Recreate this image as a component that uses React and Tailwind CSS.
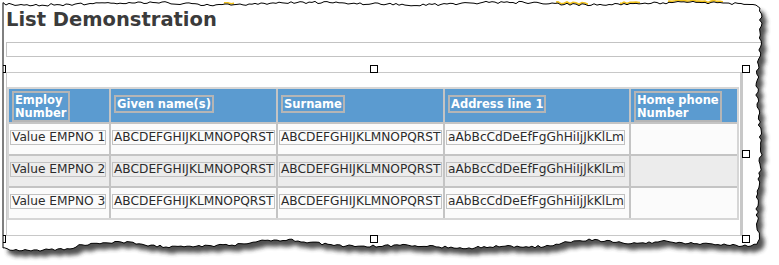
const columns = [
  { key: 'empno', label: ['Employ', 'Number'] },
  { key: 'given', label: ['Given name(s)'] },
  { key: 'surname', label: ['Surname'] },
  { key: 'address', label: ['Address line 1'] },
  { key: 'phone', label: ['Home phone', 'Number'] },
];

const rows = [1, 2, 3].map((n) => ({
  empno: `Value EMPNO ${n}`,
  given: 'ABCDEFGHIJKLMNOPQRST',
  surname: 'ABCDEFGHIJKLMNOPQRST',
  address: 'aAbBcCdDeEfFgGhHiIjJkKlLm',
  phone: '',
}));

// rough outline of the bottom tear, interpolated and roughened below
const bottomProfile = [
  [3, 247], [12, 250], [40, 250], [70, 249], [78, 245], [100, 243], [125, 242],
  [145, 245], [170, 247], [205, 246], [235, 245], [262, 241], [292, 240],
  [315, 243], [345, 246], [380, 246], [410, 245], [440, 247], [470, 248],
  [500, 246], [530, 247], [552, 246], [565, 242], [590, 240], [615, 242],
  [640, 244], [662, 241], [700, 244], [730, 245], [750, 246], [758, 244],
];

function profileAt(x) {
  for (let i = 1; i < bottomProfile.length; i++) {
    const [x0, y0] = bottomProfile[i - 1];
    const [x1, y1] = bottomProfile[i];
    if (x <= x1) return y0 + ((y1 - y0) * (x - x0)) / (x1 - x0);
  }
  return bottomProfile[bottomProfile.length - 1][1];
}

function buildTear() {
  let seed = 4242;
  const rnd = () => {
    seed = (seed * 16807) % 2147483647;
    return seed / 2147483647;
  };
  const pts = [];
  for (let x = 3; x <= 756; x += 3) pts.push([x, 3.6 + Math.sin(x / 29) * 1.2 + (rnd() - 0.5) * 2.4]);
  for (let y = 8; y <= 243; y += 3) pts.push([759 + Math.sin(y / 19) * 1.8 + (rnd() - 0.5) * 3, y]);
  for (let x = 757; x >= 4; x -= 3) pts.push([x, profileAt(x) + (rnd() - 0.5) * 2.2]);
  pts.push([3, 248]);
  return 'M' + pts.map(([x, y]) => `${x.toFixed(1)} ${y.toFixed(1)}`).join('L') + 'Z';
}

const tear = buildTear();
const frame = `M0 0H779V265H0Z${tear}`;

const Handle = ({ className }) => (
  <div className={`absolute w-[8px] h-[8px] bg-white border border-black ${className}`} />
);

const TornEdge = () => (
  <svg className="absolute inset-0 pointer-events-none" width="779" height="265">
    <defs>
      <clipPath id="outside">
        <path d={frame} clipRule="evenodd" />
      </clipPath>
      <clipPath id="yellowBits">
        <rect x="224" y="0" width="10" height="10" />
        <rect x="556" y="0" width="32" height="10" />
        <rect x="620" y="0" width="20" height="10" />
        <rect x="668" y="0" width="55" height="10" />
      </clipPath>
      <filter id="soft" x="-0.05" y="-0.05" width="1.1" height="1.1">
        <feGaussianBlur stdDeviation="2.2" />
      </filter>
    </defs>
    <path d={frame} fill="#fff" fillRule="evenodd" />
    <g clipPath="url(#outside)">
      <path d={tear} transform="translate(5 6)" fill="#333" opacity="0.85" filter="url(#soft)" />
    </g>
    <g clipPath="url(#yellowBits)">
      <path d={tear} transform="translate(0 -1.3)" fill="none" stroke="#f2c31d" strokeWidth="1.6" />
    </g>
    <path d={tear} fill="none" stroke="#000" strokeWidth="1" />
  </svg>
);

export default function App() {
  return (
    <div className="relative w-[779px] h-[265px] overflow-hidden bg-white font-['DejaVu_Sans',sans-serif]">
      <div className="pl-[6px] pt-[8px]">
        <h1 className="text-[19.5px] leading-[24px] font-bold text-[#3b3b3b]">List Demonstration</h1>

        <div className="mt-[10px] w-[760px] h-[15px] border border-[#c3c3c3]" />

        <div className="relative mt-[15px] w-[737px] h-[164px] border border-[#c8c8c8] border-r-[3px] pt-[14px]">
          <div className="grid grid-cols-[100px_165px_165px_184px_106px] grid-rows-[33px_30px_30px_30px] gap-[2px] w-[732px] border-2 border-[#d6d6d6] bg-[#c4c4c4]">
            {columns.map((col) => (
              <div key={col.key} className="bg-[#5b9bd0] pt-[2px] pl-[3px]">
                <div className="inline-block border-2 border-[#b5b5b5] px-[1px] pt-[1px] text-[11.5px] leading-[13px] font-bold text-white whitespace-nowrap">
                  {col.label.map((line) => (
                    <div key={line}>{line}</div>
                  ))}
                </div>
              </div>
            ))}
            {rows.map((row, i) =>
              columns.map((col) => (
                <div
                  key={`${i}-${col.key}`}
                  className={`overflow-hidden pl-[1px] ${i === 1 ? 'bg-[#ececec]' : 'bg-[#fbfbfb]'}`}
                >
                  {row[col.key] && (
                    <div className="inline-block border border-[#c2c2c2] pl-[1px] text-[12.2px] leading-[13px] text-[#2b2b2b] whitespace-nowrap">
                      {row[col.key]}
                    </div>
                  )}
                </div>
              ))
            )}
          </div>

          <Handle className="-top-[8px] -left-[9px]" />
          <Handle className="-top-[8px] left-[363px]" />
          <Handle className="-top-[8px] -right-[10px]" />
          <Handle className="top-[77px] -right-[10px]" />
          <Handle className="-bottom-[8px] -left-[9px]" />
          <Handle className="-bottom-[8px] left-[363px]" />
          <Handle className="-bottom-[8px] -right-[10px]" />
        </div>
      </div>

      <TornEdge />
    </div>
  );
}
